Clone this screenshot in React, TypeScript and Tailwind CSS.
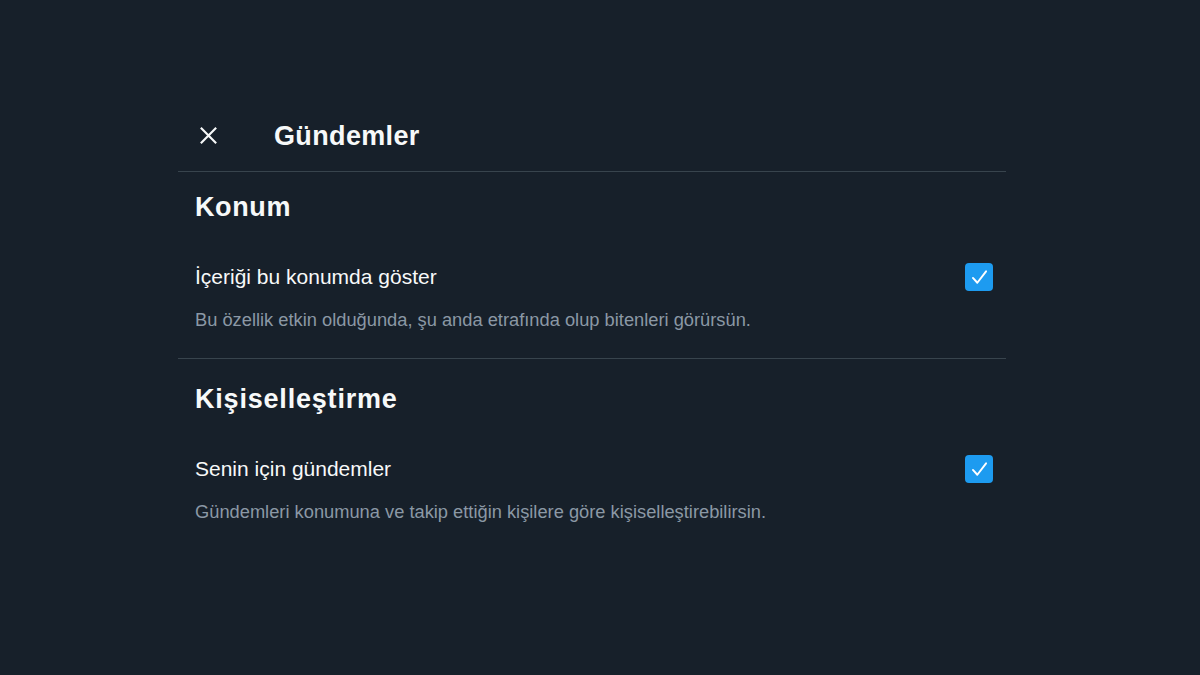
import React from 'react';

function CheckBox() {
  return (
    <div className="w-[28px] h-[28px] rounded-[4px] bg-[#1d9bf0] flex items-center justify-center shrink-0">
      <svg viewBox="0 0 24 24" className="w-[21px] h-[21px]" fill="none" stroke="#ffffff" strokeWidth="2.2" strokeLinecap="round" strokeLinejoin="round">
        <path d="M4.5 12.5l5 5.5L19.5 5" />
      </svg>
    </div>
  );
}

export default function App() {
  return (
    <div className="w-[1200px] h-[675px] bg-[#17202a] overflow-hidden" style={{ fontFamily: '"Liberation Sans", Arial, sans-serif' }}>
      <div className="ml-[178px] w-[828px] pt-[100px]">
        {/* Header */}
        <div className="h-[72px] flex items-center border-b border-[#38444d]">
          <div className="w-[62px] pl-[22px] flex items-center">
            <svg viewBox="0 0 16 16" className="w-[17px] h-[17px]" fill="none" stroke="#f7f9f9" strokeWidth="2" strokeLinecap="square">
              <path d="M1.5 1.5l13 13M14.5 1.5l-13 13" />
            </svg>
          </div>
          <h1 className="ml-[34px] text-[27px] leading-[32px] font-bold tracking-[0.35px] text-[#f7f9f9]">Gündemler</h1>
        </div>

        {/* Konum */}
        <div className="px-[17px] border-b border-[#38444d] pt-[19px] pb-[27px]">
          <h2 className="text-[27px] leading-[32px] font-bold tracking-[0.6px] text-[#f7f9f9]">Konum</h2>
          <div className="mt-[40px] h-[28px] flex items-center justify-between">
            <span className="text-[21px] text-[#f7f9f9]">İçeriği bu konumda göster</span>
            <div className="mr-[-4px]"><CheckBox /></div>
          </div>
          <p className="mt-[18px] text-[18.3px] leading-[22px] text-[#8b98a5]">
            Bu özellik etkin olduğunda, şu anda etrafında olup bitenleri görürsün.
          </p>
        </div>

        {/* Kişiselleştirme */}
        <div className="px-[17px] pt-[24px]">
          <h2 className="text-[27px] leading-[32px] font-bold tracking-[0.8px] text-[#f7f9f9]">Kişiselleştirme</h2>
          <div className="mt-[40px] h-[28px] flex items-center justify-between">
            <span className="text-[21px] text-[#f7f9f9]">Senin için gündemler</span>
            <div className="mr-[-4px]"><CheckBox /></div>
          </div>
          <p className="mt-[18px] text-[18.3px] leading-[22px] text-[#8b98a5]">
            Gündemleri konumuna ve takip ettiğin kişilere göre kişiselleştirebilirsin.
          </p>
        </div>
      </div>
    </div>
  );
}
